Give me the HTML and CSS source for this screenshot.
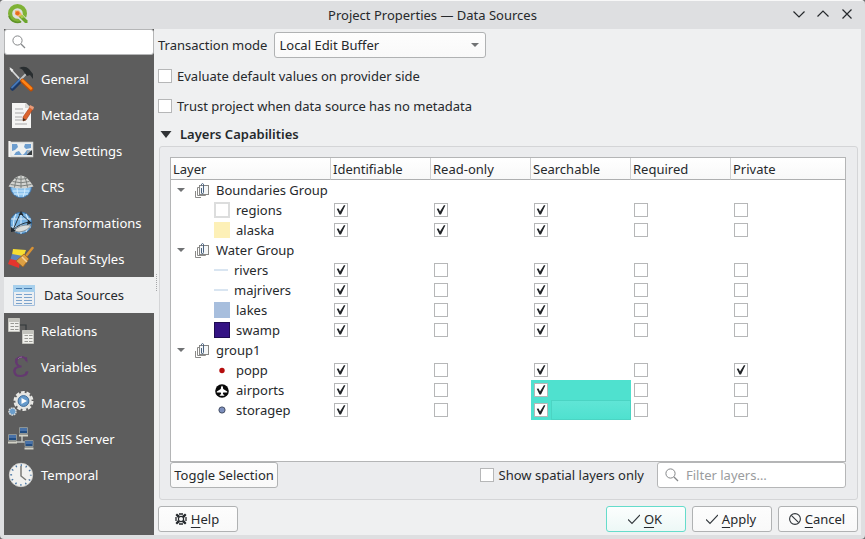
FILE: index.html
```html
<!DOCTYPE html>
<html lang="en">
<head>
<meta charset="utf-8">
<title>Project Properties — Data Sources</title>
<link rel="stylesheet" href="styles.css">
</head>
<body>
<svg class="defs" aria-hidden="true">
  <defs>
    <symbol id="search" viewBox="0 0 14 14"><circle cx="5.500" cy="5.500" r="4.600" fill="none" stroke="#858789"/><path d="M9 9l4 4" stroke="#858789" stroke-width="1.200"/></symbol>
    <symbol id="arrow" viewBox="0 0 8 4"><path d="M0 0h8L4 4z" fill="#707274"/></symbol>
    <symbol id="group" viewBox="0 0 14 15"><path d="M.5 8v6.500H6" fill="none" stroke="#8a8a88"/><path d="M4 4.500H2.500v8h8V11" fill="none" stroke="#8a8a88"/><rect x="4.500" y="2.500" width="9" height="9" fill="#f4f6f7" stroke="#878785"/><path d="M6.500 5v5M8.500 2v7.500L7.500 11 6.500 10M6.500 2.500V1.200L7.500.5l1 .7V3" fill="none" stroke="#48617f"/></symbol>
    <symbol id="tick" viewBox="0 0 12 12"><path d="M0 6.500l4 4L12 2" fill="none" stroke="#31363b" stroke-width="1.100"/></symbol>
  </defs>
</svg>
<div class="window">
  <header class="titlebar">
    <svg class="logo" viewBox="0 0 20 20" aria-hidden="true"><circle cx="9.500" cy="9.500" r="7.400" fill="none" stroke="#7fb236" stroke-width="4.200"/><path d="M1 12A9 9 0 0 0 13 17.700" fill="none" stroke="#5f9429" stroke-width="1.500"/><path d="M10 10l9 9" stroke="#dedfe1" stroke-width="6"/><path d="M11 11.500h3.500l5 5v2.500H17l-6-6z" fill="#6ba52c"/><path d="M11 11h3.500l2 2-3 1.500z" fill="#a9cc4b"/><path d="M7 6.500h4l3 4-3 2.500-4-2.500z" fill="#f5b05c"/><circle cx="9.500" cy="9.300" r="2" fill="#e76a22"/></svg>
    <h1>Project Properties — Data Sources</h1>
    <div class="window-controls">
      <button type="button" aria-label="Minimize"><svg viewBox="0 0 12 12"><path d="M.5 3.500L6 9l5.500-5.500"/></svg></button>
      <button type="button" aria-label="Maximize"><svg viewBox="0 0 12 12"><path d="M.5 8.500L6 3l5.500 5.500"/></svg></button>
      <button type="button" aria-label="Close"><svg viewBox="0 0 12 12"><path d="M1.500 1.500l9 9M10.500 1.500l-9 9"/></svg></button>
    </div>
  </header>
  <div class="body">
    <nav class="sidebar" aria-label="Sections">
      <div class="search"><svg aria-hidden="true"><use href="#search"/></svg><input type="text" aria-label="Search settings"></div>
      <ul>
        <li><a href="#general"><svg viewBox="0 0 26 26" aria-hidden="true"><path d="M2 2.500l11 12" stroke="#d8dadb" stroke-width="1.800"/><path d="M1.500 1l4 3-2 2z" fill="#eee"/><path d="M4.500 22.500l8-8" stroke="#1c3966" stroke-width="4.500" stroke-linecap="round"/><path d="M4 21.500l8-8" stroke="#4678b8" stroke-width="1.800" stroke-linecap="round"/><path d="M18 8l-6 6" stroke="#bfc2c2" stroke-width="2"/><path d="M11 2q6-3 10 1l4 5v5l-3-4-3 1-3-4q-1-3-5-4z" fill="#292e30"/><path d="M14.500 15l8.500 8" stroke="#bd4e05" stroke-width="4.500" stroke-linecap="round"/><path d="M14.500 14.500l8.500 8" stroke="#ff8416" stroke-width="2.500" stroke-linecap="round"/></svg><span>General</span></a></li>
        <li><a href="#metadata"><svg viewBox="0 0 26 26" aria-hidden="true"><path d="M4 1h14l5 5v20H4z" fill="#f5f5f4"/><path d="M17 1v5h6" fill="#d5d5d3"/><path d="M7 7h8M7 11h9M7 15h7M7 18h9M7 22h12" stroke="#aaa" stroke-width="1.200"/><path d="M22 5l3 2-7 11-3 1v-4z" fill="#dd642d" stroke="#9d421e" stroke-width=".6"/><path d="M22 3l4 2-1 3-4-3z" fill="#e99b78"/><path d="M15 16v3l3-1z" fill="#423325"/></svg><span>Metadata</span></a></li>
        <li><a href="#view"><svg viewBox="0 0 26 26" aria-hidden="true"><path d="M2.500 4.500h22v14h-22z" fill="#eef1f2" stroke="#d9dad8" stroke-width="1.500"/><path d="M4 6h19v11H4z" fill="#6d9ecf"/><path d="M4 13l3-1 3-3-1-3h8l-1 3 2 2 5-1v3l-4-1-3 4-2 1-3-4-3 1-2 3H4z" fill="#eef1f1"/><path d="M18.500 17l5.500-5v5z" fill="#35393b"/><path d="M19 16v-3l4-1z" fill="#a9adae"/><path d="M1.500 3v16" stroke="#f4f4f2" stroke-width="2.200"/></svg><span>View Settings</span></a></li>
        <li><a href="#crs"><svg viewBox="0 0 26 26" aria-hidden="true"><path d="M2.500 13a10.500 10.500 0 0 0 21 0z" fill="#8ec4ee" stroke="#4376aa"/><path d="M5 17h16M6 20h14M9 14q0 5 2 9M17 14q0 5-2 9" stroke="#d3edff" fill="none"/><path d="M.5 12.500Q3 8 7 4q3-2.500 6-2.500T19 4q4 4 6.500 8.500-12 4-25 0z" fill="#d2d3d0"/><path d="M4.500 7.500q8.500 2.500 17 0M2.500 10.500q10.500 3 21 0M7 4.500q6 1.500 12 0M9.500 2.500Q7 8 6.500 13.500M16.500 2.500Q19 8 19.500 13.500M13 2v12" fill="none" stroke="#747876" stroke-width=".9"/></svg><span>CRS</span></a></li>
        <li><a href="#transformations"><svg viewBox="0 0 26 26" aria-hidden="true"><circle cx="13" cy="13" r="10.700" fill="#78b4e4" stroke="#376c9e"/><path d="M3 9h20M3 17h20M13 2v22M8 4Q3 13 8 22M18 4q5 9 0 18" fill="none" stroke="#d5eafa" stroke-width="1.100"/><path d="M6 21q5-7 17-6-3 6-12 7z" fill="#dadddb" stroke="#777" stroke-width=".7"/><path d="M12 4L5 20M13 4l9 8M5 20q7-7 17-8" stroke="#27333d" stroke-width="1" fill="none"/><path d="M10.500 5l2.500-4 2.500 4zM3 17v5l5-1zM20 9.500l4 3.500-5 2z" fill="#202930"/></svg><span>Transformations</span></a></li>
        <li><a href="#styles"><svg viewBox="0 0 26 26" aria-hidden="true"><path d="M5 3l13 1-3 8-11-3z" fill="#f7df31"/><path d="M4 8l11 2-3 8-10-3z" fill="#5e84ba"/><path d="M2 13l10 2-1 7-11-4z" fill="#e5342e"/><path d="M24.500 2L18 10" stroke="#d89234" stroke-width="2.500" stroke-linecap="round"/><path d="M16 8l5 5-6 8-7-6z" fill="#dda043" stroke="#9e6420" stroke-width=".8"/><path d="M14 11l5 5" stroke="#f3d39c" stroke-width="1.500"/></svg><span>Default Styles</span></a></li>
        <li class="selected"><a href="#sources" aria-current="page"><svg viewBox="0 0 26 26" aria-hidden="true"><path d="M2.500 3.500h21v20h-21z" fill="#eceff2" stroke="#a3bfdd"/><path d="M2 3h22v7H2z" fill="#a7d0ed"/><path d="M5 6.500h6M13 6.500h8" stroke="#477baf" stroke-width="1.200"/><path d="M5 12.500h6M13 12.500h8M5 15.500h6M13 15.500h8M5 18.500h6M13 18.500h8M5 21.500h6M13 21.500h8" stroke="#7ba3cd"/></svg><span>Data Sources</span></a></li>
        <li><a href="#relations"><svg viewBox="0 0 26 26" aria-hidden="true"><path d="M12 7h6v7" fill="none" stroke="#32383b" stroke-width="1.200"/><g id="card"><path d="M.5.500h11v13H.5z" fill="#efefeb" stroke="#c3c3bd"/><path d="M1 1h10v3H1z" fill="#c3c3bd"/><path d="M2.500 5.500H6M7 5.500h3.500M2.500 8.500H6M7 8.500h3.500M2.500 11.500H6M7 11.500h3.500" stroke="#999994"/></g><use href="#card" x="14" y="12"/></svg><span>Relations</span></a></li>
        <li><a href="#variables"><svg viewBox="0 0 26 26" aria-hidden="true"><path d="M18.500 7q-1-4-5-4-5 0-5 5 0 4 5 4.500-7 0-7 5 0 4.500 6 4.500 5 0 7-4" fill="none" stroke="#643970" stroke-width="2"/><path d="M8.500 4.500q-2 4 1.500 7M7 14q-2 4 1.500 7" fill="none" stroke="#643970" stroke-width="1.800"/><path d="M16 4l3-1 .5 6zM17 18l3.500-1-2 5z" fill="#643970"/><path d="M10 5q1-2 4-2" stroke="#9b72a4" fill="none" stroke-width=".8"/></svg><span>Variables</span></a></li>
        <li><a href="#macros"><svg viewBox="0 0 26 26" aria-hidden="true"><circle cx="15.500" cy="11" r="8.800" fill="none" stroke="#e9e9e6" stroke-width="2.400" stroke-dasharray="3.700 1.830"/><circle cx="15.500" cy="11" r="8.200" fill="#e5e5e2"/><circle cx="15.500" cy="11" r="5.400" fill="#659acb" stroke="#3e6b98"/><path d="M13.500 8l5.500 3-5.500 3z" fill="#fff"/><circle cx="4.500" cy="21.500" r="3.500" fill="#6b9dca" stroke="#d5d8d8" stroke-width="1.500" stroke-dasharray="1.700 .7"/></svg><span>Macros</span></a></li>
        <li><a href="#server"><svg viewBox="0 0 26 26" aria-hidden="true"><path d="M14 10v6M8 16h11" stroke="#bfc2be" stroke-width="1.500"/><g id="pc"><path d="M11.500 1.500h8v6h-8z" fill="#214d83" stroke="#8e9595"/><path d="M12 2h7v3h-7z" fill="#4972a8"/><path d="M11 8.500h9v2h-9z" fill="#d2d2c7"/></g><use href="#pc" x="-11" y="7"/><use href="#pc" x="5.500" y="13"/></svg><span>QGIS Server</span></a></li>
        <li><a href="#temporal"><svg viewBox="0 0 26 26" aria-hidden="true"><circle cx="13" cy="13" r="11.700" fill="#f1f1ef" stroke="#d1d1ce" stroke-width=".8"/><circle cx="13" cy="13" r="9.800" fill="none" stroke="#4774a3" stroke-width="1.800" stroke-dasharray="1.300 3.831" stroke-dashoffset=".65"/><path d="M13 4v10l5 4" fill="none" stroke="#797a77" stroke-width="1.500"/></svg><span>Temporal</span></a></li>
      </ul>
    </nav>
    <div class="splitter" aria-hidden="true"><i></i></div>
    <main>
      <div class="mode"><label for="mode">Transaction mode</label>
        <div class="select"><select id="mode"><option>Local Edit Buffer</option></select><svg aria-hidden="true"><use href="#arrow"/></svg></div>
      </div>
      <label class="option"><input type="checkbox">Evaluate default values on provider side</label>
      <label class="option"><input type="checkbox">Trust project when data source has no metadata</label>
      <h2><svg viewBox="0 0 12 8" aria-hidden="true"><path d="M.5 1h11L6 8z" fill="#303336"/></svg>Layers Capabilities</h2>
      <section class="panel">
        <div class="tree">
          <table>
            <colgroup><col class="c-layer"><col class="c-flag"><col class="c-flag"><col class="c-flag"><col class="c-flag"><col></colgroup>
            <thead><tr><th>Layer</th><th>Identifiable</th><th>Read-only</th><th>Searchable</th><th>Required</th><th>Private</th></tr></thead>
            <tbody>
              <tr><td colspan="6"><div class="group"><svg class="twist"><use href="#arrow"/></svg><svg class="stack"><use href="#group"/></svg>Boundaries Group</div></td></tr>
              <tr><td><div class="leaf"><i class="swatch regions"></i>regions</div></td><td><input type="checkbox" checked aria-label="regions identifiable"></td><td><input type="checkbox" checked aria-label="regions read-only"></td><td><input type="checkbox" checked aria-label="regions searchable"></td><td><input type="checkbox" aria-label="regions required"></td><td><input type="checkbox" aria-label="regions private"></td></tr>
              <tr><td><div class="leaf"><i class="swatch alaska"></i>alaska</div></td><td><input type="checkbox" checked aria-label="alaska identifiable"></td><td><input type="checkbox" checked aria-label="alaska read-only"></td><td><input type="checkbox" checked aria-label="alaska searchable"></td><td><input type="checkbox" aria-label="alaska required"></td><td><input type="checkbox" aria-label="alaska private"></td></tr>
              <tr><td colspan="6"><div class="group"><svg class="twist"><use href="#arrow"/></svg><svg class="stack"><use href="#group"/></svg>Water Group</div></td></tr>
              <tr><td><div class="leaf"><i class="line"></i>rivers</div></td><td><input type="checkbox" checked aria-label="rivers identifiable"></td><td><input type="checkbox" aria-label="rivers read-only"></td><td><input type="checkbox" checked aria-label="rivers searchable"></td><td><input type="checkbox" aria-label="rivers required"></td><td><input type="checkbox" aria-label="rivers private"></td></tr>
              <tr><td><div class="leaf"><i class="line"></i>majrivers</div></td><td><input type="checkbox" checked aria-label="majrivers identifiable"></td><td><input type="checkbox" aria-label="majrivers read-only"></td><td><input type="checkbox" checked aria-label="majrivers searchable"></td><td><input type="checkbox" aria-label="majrivers required"></td><td><input type="checkbox" aria-label="majrivers private"></td></tr>
              <tr><td><div class="leaf"><i class="swatch lakes"></i>lakes</div></td><td><input type="checkbox" checked aria-label="lakes identifiable"></td><td><input type="checkbox" aria-label="lakes read-only"></td><td><input type="checkbox" checked aria-label="lakes searchable"></td><td><input type="checkbox" aria-label="lakes required"></td><td><input type="checkbox" aria-label="lakes private"></td></tr>
              <tr><td><div class="leaf"><i class="swatch swamp"></i>swamp</div></td><td><input type="checkbox" checked aria-label="swamp identifiable"></td><td><input type="checkbox" aria-label="swamp read-only"></td><td><input type="checkbox" checked aria-label="swamp searchable"></td><td><input type="checkbox" aria-label="swamp required"></td><td><input type="checkbox" aria-label="swamp private"></td></tr>
              <tr><td colspan="6"><div class="group"><svg class="twist"><use href="#arrow"/></svg><svg class="stack"><use href="#group"/></svg>group1</div></td></tr>
              <tr><td><div class="leaf"><svg class="point" viewBox="0 0 16 16"><circle cx="8" cy="8.500" r="2.700" fill="#b50d0d"/></svg>popp</div></td><td><input type="checkbox" checked aria-label="popp identifiable"></td><td><input type="checkbox" aria-label="popp read-only"></td><td><input type="checkbox" checked aria-label="popp searchable"></td><td><input type="checkbox" aria-label="popp required"></td><td><input type="checkbox" checked aria-label="popp private"></td></tr>
              <tr><td><div class="leaf"><svg class="point" viewBox="0 0 16 16"><circle cx="8" cy="9" r="6.800" fill="#080808"/><path d="M8 3.500q1.200 1 1.200 3.500l4 2.500v1H9.200l-.4 1.500 1.500 1v.7H5.700V13l1.500-1-.4-1.500h-4v-1l4-2.500q0-2.500 1.200-3.500z" fill="#fff"/></svg>airports</div></td><td><input type="checkbox" checked aria-label="airports identifiable"></td><td><input type="checkbox" aria-label="airports read-only"></td><td class="picked"><input type="checkbox" checked aria-label="airports searchable"></td><td><input type="checkbox" aria-label="airports required"></td><td><input type="checkbox" aria-label="airports private"></td></tr>
              <tr><td><div class="leaf"><svg class="point" viewBox="0 0 16 16"><circle cx="8" cy="8" r="3.100" fill="#7d8fbd" stroke="#454f66"/></svg>storagep</div></td><td><input type="checkbox" checked aria-label="storagep identifiable"></td><td><input type="checkbox" aria-label="storagep read-only"></td><td class="picked current"><div><input type="checkbox" checked aria-label="storagep searchable"><i></i></div></td><td><input type="checkbox" aria-label="storagep required"></td><td><input type="checkbox" aria-label="storagep private"></td></tr>
            </tbody>
          </table>
        </div>
        <div class="tools">
          <button type="button" class="btn toggle">Toggle Selection</button>
          <label class="option spatial"><input type="checkbox">Show spatial layers only</label>
          <div class="filter"><svg aria-hidden="true"><use href="#search"/></svg><input type="text" placeholder="Filter layers…" aria-label="Filter layers"></div>
        </div>
      </section>
      <footer>
        <button type="button" class="btn help"><svg viewBox="0 0 12 12"><path d="M4 1h4M4 11h4M1 4v4M11 4v4" stroke="#25292d" stroke-width="1.300"/><circle cx="6" cy="6" r="2.600" fill="none" stroke="#25292d" stroke-width="1.200"/><path d="M.5 2L2 .5l3 2.500-2 2zM11.500 2L10 .5 7 3l2 2zM.5 10L2 11.500 5 9 3 7zM11.500 10L10 11.500 7 9l2-2z" fill="#25292d"/></svg><span><u>H</u>elp</span></button>
        <button type="button" class="btn ok"><svg><use href="#tick"/></svg><span><u>O</u>K</span></button>
        <button type="button" class="btn"><svg><use href="#tick"/></svg><span><u>A</u>pply</span></button>
        <button type="button" class="btn"><svg viewBox="0 0 12 12"><circle cx="6" cy="6" r="5.400" fill="none" stroke="#31363b" stroke-width="1.100"/><path d="M2.300 2.300l7.400 7.400" stroke="#31363b" stroke-width="1.100"/></svg><span><u>C</u>ancel</span></button>
      </footer>
    </main>
  </div>
</div>
</body>
</html>
```
FILE: styles.css
```css
* { box-sizing: border-box; }

body {
  margin: 0;
  background: #6b6c6e;
  color: #26292c;
  font: 13px/18px "Noto Sans", sans-serif;
}

button, input, select { font: inherit; color: inherit; }
svg { display: block; flex: none; }
.defs { position: absolute; width: 0; height: 0; }

.window {
  display: flex;
  flex-direction: column;
  min-height: 100vh;
  padding: 0 4px 4px;
  background: #dedfe1;
  border-top: 1px solid #f8f8f8;
  border-radius: 4px;
}

.titlebar {
  display: grid;
  grid-template-columns: 72px 1fr 72px;
  align-items: center;
  height: 28px;
}
.logo { width: 20px; height: 20px; margin: 0 0 2px 4px; }
h1 { margin: 0; font-size: 13px; font-weight: 400; text-align: center; }
.window-controls { display: flex; justify-content: flex-end; gap: 12px; padding: 0 8px 2px 0; }
.window-controls button { padding: 0; border: 0; background: none; }
.window-controls svg { width: 12px; height: 12px; fill: none; stroke: #25282b; stroke-width: 1.2; }

.body { display: flex; flex: 1; background: #eff0f1; }

.sidebar { width: 150px; background: #5d5d5d; }
.search, .filter {
  display: flex;
  align-items: center;
  height: 26px;
  border: 1px solid #b5b6b7;
  border-radius: 3px;
  background: #fff;
}
.search, .filter { padding-left: 7px; }
.search svg, .filter svg { width: 14px; height: 14px; }
.search input, .filter input {
  flex: 1;
  min-width: 0;
  border: 0;
  padding: 0 7px;
  outline: 0;
  background: none;
}
.filter input::placeholder { color: #9a9c9e; opacity: 1; }

.sidebar ul { margin: 0; padding: 6px 0 0; list-style: none; }
.sidebar a {
  display: flex;
  align-items: center;
  gap: 7px;
  height: 36px;
  padding-left: 4px;
  color: #fff;
  text-decoration: none;
}
.sidebar a svg { width: 26px; height: 26px; }
.sidebar .selected a { padding-left: 7px; background: #eff0f1; color: #26292c; }

.splitter { display: flex; align-items: center; width: 4px; }
.splitter i { height: 17px; margin-left: 2px; border-left: 1px dotted #a5a6a8; }

main { display: flex; flex: 1; flex-direction: column; min-width: 0; padding: 3px 3px 3px 0; }
.mode { display: flex; align-items: center; gap: 7px; margin-bottom: 3px; }
.select { display: flex; align-items: center; width: 212px; }
select {
  appearance: none;
  width: 100%;
  height: 26px;
  padding: 0 4px;
  border: 1px solid #b0b2b3;
  border-radius: 3px;
  background: linear-gradient(#fdfdfd, #f9f9f9);
}
.select svg { width: 8px; height: 4px; margin-left: -15px; pointer-events: none; }

.option { display: flex; align-items: center; gap: 5px; height: 30px; }
input[type="checkbox"] {
  appearance: none;
  flex: none;
  display: block;
  width: 14px;
  height: 14px;
  margin: 0;
  border: 1px solid #b6b7b8;
  background: #fff;
}
input[type="checkbox"]:checked {
  background: #fff url("data:image/svg+xml,%3Csvg xmlns='http://www.w3.org/2000/svg' viewBox='0 0 12 12'%3E%3Cpath d='M1.700 4.800L3.500 4.500l1.500 3L8.900 1.200h1.500L6 10.500H4.500z' fill='%23202326'/%3E%3C/svg%3E") center / 12px 12px no-repeat;
}

h2 {
  display: flex;
  align-items: center;
  gap: 8px;
  height: 25px;
  margin: 0;
  padding-left: 2px;
  font-size: 13px;
  font-weight: 600;
}
h2 svg { width: 12px; height: 8px; }

.panel {
  display: flex;
  flex: 1;
  flex-direction: column;
  margin-left: 1px;
  padding: 10px 11px 11px 10px;
  border: 1px solid #d4d5d7;
  border-radius: 3px;
  background: #ebecee;
}
.tree { flex: 1; border: 1px solid #b4b5b6; background: #fff; }
table { width: 100%; table-layout: fixed; border-spacing: 0; }
.c-layer { width: 160px; }
.c-flag { width: 100px; }
th {
  height: 22px;
  padding: 0 2px;
  border-right: 1px solid #d0d1d2;
  border-bottom: 1px solid #aeafb0;
  background: linear-gradient(#fff, #f8f8f8);
  font-weight: 400;
  text-align: left;
}
th:last-child { border-right: 0; }
td { height: 20px; padding: 0 3px; }
td:first-child { padding: 0; }
.group, .leaf { display: flex; align-items: center; height: 20px; }
.group { padding-left: 6px; }
.twist { width: 8px; height: 4px; margin-right: 10px; }
.stack { width: 14px; height: 15px; margin-right: 7px; }
.leaf { gap: 6px; padding-left: 43px; }
.swatch, .point { width: 16px; height: 16px; }
.regions { border: 2px solid #dcdddd; }
.alaska { background: #fdf0b7; }
.lakes { background: #a7bedd; }
.swamp { border: 1px solid #1e0b52; background: #341384; }
.line { width: 14px; height: 2px; background: #d9e5f1; }
.picked { background: #4fe1cf; }
.current div { display: flex; align-items: center; gap: 3px; height: 20px; }
.current i {
  flex: 1;
  align-self: stretch;
  margin-right: -3px;
  border: 1px solid #4bd4c3;
  background: linear-gradient(#60e5d6, #4fe1cf);
}

.btn {
  display: flex;
  align-items: center;
  justify-content: center;
  gap: 4px;
  width: 80px;
  height: 26px;
  padding: 0 2px 0 0;
  border: 1px solid #b0b2b3;
  border-radius: 3px;
  background: linear-gradient(#fdfdfd, #f9f9f9);
}
.btn svg { width: 12px; height: 12px; }
.btn u { text-underline-offset: 3px; }
.tools { display: flex; align-items: center; }
.toggle { width: 108px; padding: 0; }
.spatial { height: 26px; margin-left: auto; }
.filter { width: 189px; margin-left: 13px; }

footer { display: flex; gap: 6px; margin-top: 6px; }
.help { margin-right: auto; }
.ok { border-color: #65dccb; background: linear-gradient(#fcfefe, #edf8f6); }
```
